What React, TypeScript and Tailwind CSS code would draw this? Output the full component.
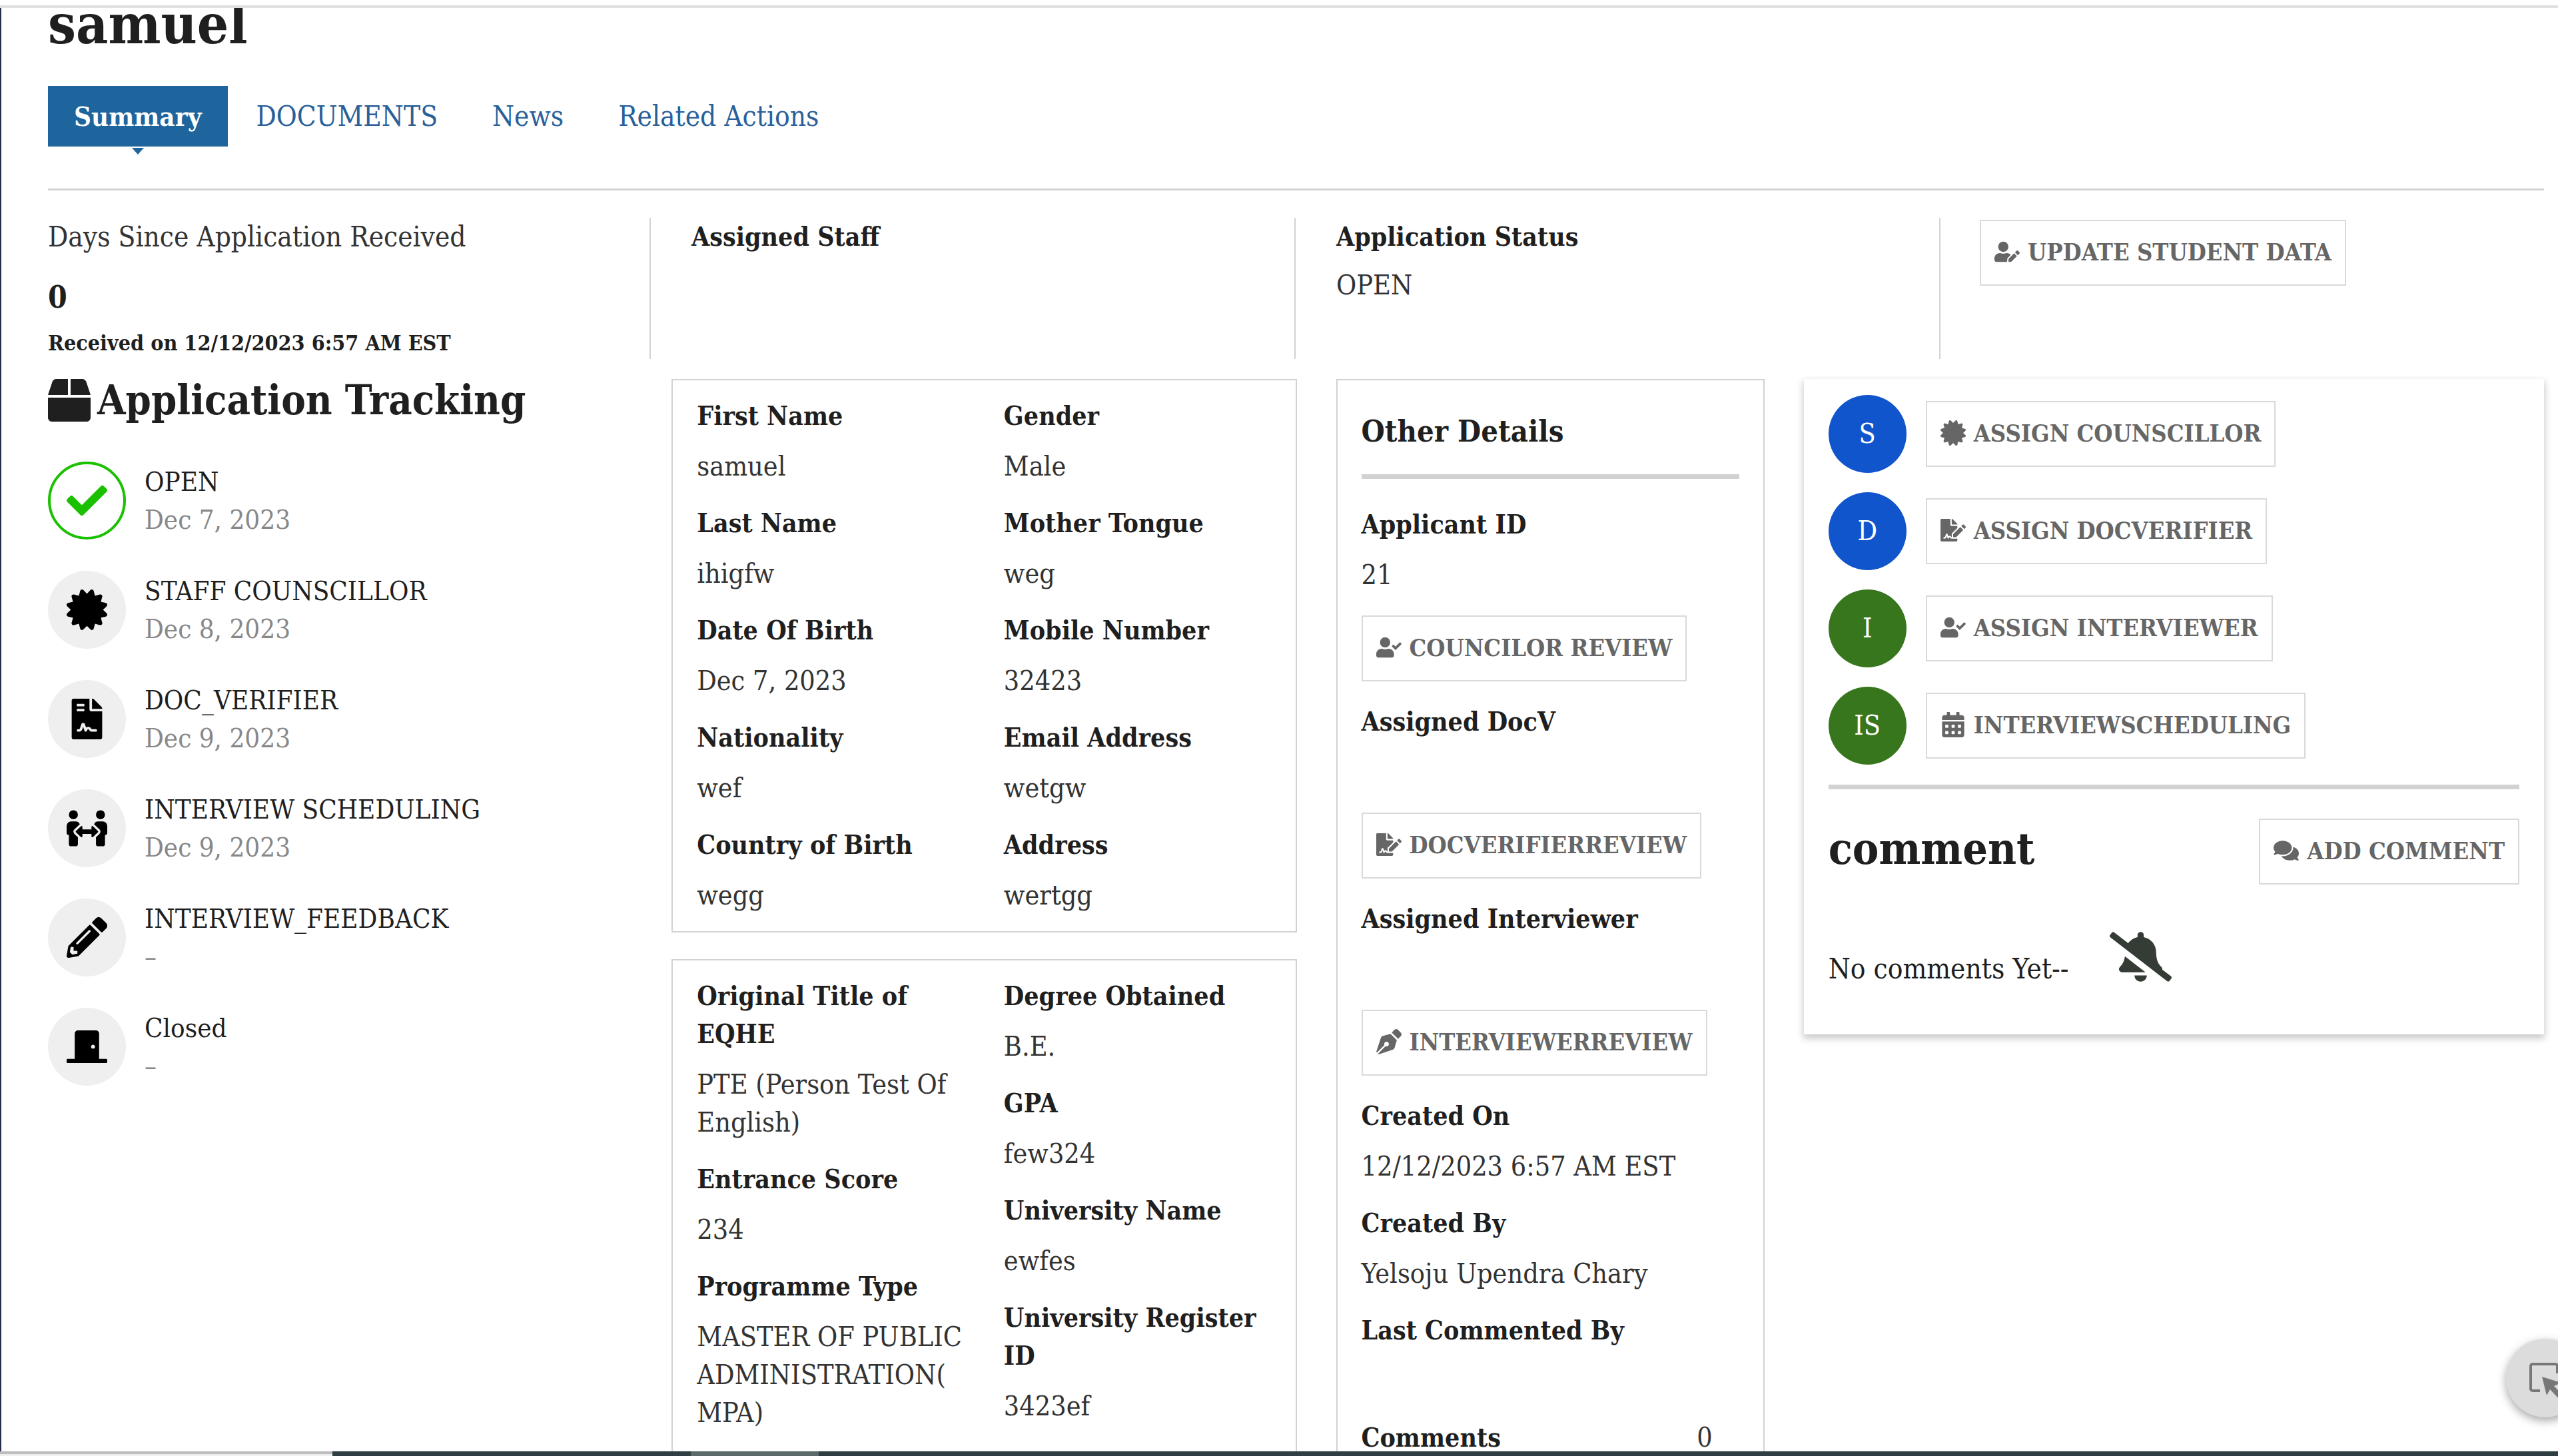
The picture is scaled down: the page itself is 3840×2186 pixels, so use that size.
import type { ReactNode } from 'react'
import type { IconType } from 'react-icons'
import {
  FaBellSlash,
  FaBox,
  FaCalendarAlt,
  FaCertificate,
  FaCheck,
  FaComments,
  FaDoorClosed,
  FaFileContract,
  FaFileSignature,
  FaPencilAlt,
  FaPenNib,
  FaPeopleArrows,
  FaUserCheck,
  FaUserEdit,
} from 'react-icons/fa'

const tabs = ['Summary', 'DOCUMENTS', 'News', 'Related Actions']

const steps: { icon: IconType; label: string; date: string; done?: boolean }[] = [
  { icon: FaCheck, label: 'OPEN', date: 'Dec 7, 2023', done: true },
  { icon: FaCertificate, label: 'STAFF COUNSCILLOR', date: 'Dec 8, 2023' },
  { icon: FaFileContract, label: 'DOC_VERIFIER', date: 'Dec 9, 2023' },
  { icon: FaPeopleArrows, label: 'INTERVIEW SCHEDULING', date: 'Dec 9, 2023' },
  { icon: FaPencilAlt, label: 'INTERVIEW_FEEDBACK', date: '–' },
  { icon: FaDoorClosed, label: 'Closed', date: '–' },
]

const personal = [
  [
    ['First Name', 'samuel'],
    ['Last Name', 'ihigfw'],
    ['Date Of Birth', 'Dec 7, 2023'],
    ['Nationality', 'wef'],
    ['Country of Birth', 'wegg'],
  ],
  [
    ['Gender', 'Male'],
    ['Mother Tongue', 'weg'],
    ['Mobile Number', '32423'],
    ['Email Address', 'wetgw'],
    ['Address', 'wertgg'],
  ],
]

const education = [
  [
    ['Original Title of EQHE', 'PTE (Person Test Of English)'],
    ['Entrance Score', '234'],
    ['Programme Type', 'MASTER OF PUBLIC ADMINISTRATION(MPA)'],
  ],
  [
    ['Degree Obtained', 'B.E.'],
    ['GPA', 'few324'],
    ['University Name', 'ewfes'],
    ['University Register ID', '3423ef'],
  ],
]

const assignments = [
  { initials: 'S', color: 'bg-[#1155cc]', icon: FaCertificate, label: 'ASSIGN COUNSCILLOR' },
  { initials: 'D', color: 'bg-[#1155cc]', icon: FaFileSignature, label: 'ASSIGN DOCVERIFIER' },
  { initials: 'I', color: 'bg-[#38761d]', icon: FaUserCheck, label: 'ASSIGN INTERVIEWER' },
  { initials: 'IS', color: 'bg-[#38761d]', icon: FaCalendarAlt, label: 'INTERVIEWSCHEDULING' },
]

function ActionButton({ icon: Icon, children }: { icon: IconType; children: ReactNode }) {
  return (
    <button
      type="button"
      className="inline-flex h-[99px] items-center gap-3 whitespace-nowrap border-2 border-[#d9d9d9] bg-white px-5 pb-1 text-[36px] font-bold text-[#666]"
    >
      <Icon className="size-[38px]" />
      {children}
    </button>
  )
}

function Label({ children }: { children: ReactNode }) {
  return <dt className="text-[39px] leading-[57px] font-bold">{children}</dt>
}

function Field({ label, value }: { label: string; value: string }) {
  return (
    <div>
      <Label>{label}</Label>
      <dd className="mt-[19px] min-h-[57px] leading-[57px] break-words text-[#333]">{value}</dd>
    </div>
  )
}

function FieldBox({ columns }: { columns: string[][][] }) {
  return (
    <div className="grid grid-cols-2 gap-x-[59px] border-2 border-[#d2d2d2] px-9 py-[25px] last:grow">
      {columns.map((fields, i) => (
        <dl key={i} className="flex min-w-0 flex-col gap-7">
          {fields.map(([label, value]) => (
            <Field key={label} label={label} value={value} />
          ))}
        </dl>
      ))}
    </div>
  )
}

function Header() {
  return (
    <header>
      <h1 className="text-[83px] leading-[48px] font-bold">samuel</h1>
      <nav className="mt-[69px] flex gap-1 border-b-[3px] border-[#d2d2d2] pb-[63px] text-[42px] leading-[91px]">
        {tabs.map((tab, i) =>
          i === 0 ? (
            <a key={tab} href="#" aria-current="page" className="relative bg-[#1d659c] px-[39px] text-[40px] font-bold text-white">
              {tab}
              <svg viewBox="0 0 18 10" className="absolute top-full left-1/2 mt-0.5 h-[10px] w-[18px] -translate-x-1/2 fill-[#1d659c]">
                <path d="M0 0h18L9 10z" />
              </svg>
            </a>
          ) : (
            <a key={tab} href="#" className="px-[39px] text-[#2a6099]">
              {tab}
            </a>
          )
        )}
      </nav>
    </header>
  )
}

function StatusRow() {
  return (
    <section className="mt-[41px] grid grid-cols-[905fr_968fr_968fr_906fr]">
      <div className="border-r-2 border-[#d2d2d2]">
        <p className="text-[42px] leading-[57px] text-[#333]">Days Since Application Received</p>
        <p className="mt-[34px] text-[46px] leading-[57px] font-bold">0</p>
        <p className="mt-4 text-[32px] leading-[48px] font-bold">Received on 12/12/2023 6:57 AM EST</p>
      </div>
      <dl className="border-r-2 border-[#d2d2d2] pl-[61px]">
        <Label>Assigned Staff</Label>
      </dl>
      <dl className="border-r-2 border-[#d2d2d2] pl-[61px]">
        <Label>Application Status</Label>
        <dd className="mt-4 leading-[57px] text-[#333]">OPEN</dd>
      </dl>
      <div className="pt-[3px] pl-[59px]">
        <ActionButton icon={FaUserEdit}>UPDATE STUDENT DATA</ActionButton>
      </div>
    </section>
  )
}

function Tracking() {
  return (
    <section>
      <h2 className="flex items-center gap-[10px] text-[61px] leading-[64px] font-bold whitespace-nowrap">
        <FaBox className="size-[64px]" />
        Application Tracking
      </h2>
      <ol className="mt-[60px] flex flex-col gap-[47px] text-[40px]">
        {steps.map(({ icon: Icon, label, date, done }) => (
          <li key={label} className="flex items-center gap-7">
            <span
              className={
                done
                  ? 'flex size-[117px] items-center justify-center rounded-full border-[4px] border-[#1bc100] text-[#1bc100]'
                  : 'flex size-[117px] items-center justify-center rounded-full bg-[#efefef] text-black'
              }
            >
              <Icon className="size-[61px]" />
            </span>
            <div className="leading-[57px]">
              <p>{label}</p>
              <p className="text-[#888]">{date}</p>
            </div>
          </li>
        ))}
      </ol>
    </section>
  )
}

function OtherDetails() {
  return (
    <section className="border-2 border-[#d2d2d2] px-9 pt-12 pb-[25px]">
      <h3 className="border-b-[7px] border-[#d2d2d2] pb-9 text-[45px] leading-[57px] font-bold">Other Details</h3>
      <dl className="mt-10 flex flex-col items-start gap-8">
        <Field label="Applicant ID" value="21" />
        <ActionButton icon={FaUserCheck}>COUNCILOR REVIEW</ActionButton>
        <Field label="Assigned DocV" value="" />
        <ActionButton icon={FaFileSignature}>DOCVERIFIERREVIEW</ActionButton>
        <Field label="Assigned Interviewer" value="" />
        <ActionButton icon={FaPenNib}>INTERVIEWERREVIEW</ActionButton>
      </dl>
      <dl className="mt-8 flex flex-col gap-7">
        <Field label="Created On" value="12/12/2023 6:57 AM EST" />
        <Field label="Created By" value="Yelsoju Upendra Chary" />
        <Field label="Last Commented By" value="" />
        <div className="flex justify-between pr-10">
          <Label>Comments</Label>
          <dd className="leading-[57px] text-[#333]">0</dd>
        </div>
      </dl>
    </section>
  )
}

function ActionsCard() {
  return (
    <section className="self-start bg-white px-[37px] pt-6 pb-[70px] shadow-[0_5px_10px_1px_rgba(0,0,0,0.22)]">
      <ul className="flex flex-col gap-[29px] border-b-[7px] border-[#d2d2d2] pb-[30px]">
        {assignments.map(({ initials, color, icon, label }) => (
          <li key={label} className="flex items-center gap-[29px]">
            <span className={`flex size-[117px] items-center justify-center rounded-full text-white ${color}`}>{initials}</span>
            <ActionButton icon={icon}>{label}</ActionButton>
          </li>
        ))}
      </ul>
      <div className="mt-11 flex items-start justify-between">
        <h2 className="text-[66px] leading-[90px] font-bold">comment</h2>
        <ActionButton icon={FaComments}>ADD COMMENT</ActionButton>
      </div>
      <div className="mt-[62px] flex items-end gap-[61px]">
        <p className="text-[42px] leading-[57px]">No comments Yet--</p>
        <FaBellSlash className="size-[93px] text-[#353b35]" />
      </div>
    </section>
  )
}

export default function App() {
  return (
    <div className="relative flex h-screen flex-col overflow-hidden bg-white font-['DejaVu_Serif_Condensed','DejaVu_Serif',serif] text-[41px] text-[#1f1f1f]">
      <div className="mt-2 h-1 shrink-0 bg-[#dfe1de]" />
      <main className="min-h-0 flex-1 overflow-hidden border-l-2 border-[#26304a] pr-[21px] pl-[70px]">
        <Header />
        <StatusRow />
        <div className="mt-[30px] grid grid-cols-[877fr_938fr_643fr_1111fr] gap-x-[59px]">
          <Tracking />
          <div className="flex flex-col gap-10">
            <FieldBox columns={personal} />
            <FieldBox columns={education} />
          </div>
          <OtherDetails />
          <ActionsCard />
        </div>
      </main>

      {/* Window strip along the bottom */}
      <footer className="flex h-[7px] shrink-0 bg-[#2e3e42]">
        <div className="w-[13%] border-t-4 border-[#bdbdbd] bg-[#efefef]" />
        <div className="ml-[14%] w-[5%] bg-[#5c6a69]" />
      </footer>

      {/* Floating capture button, half off the right edge */}
      <button
        type="button"
        aria-label="Select element"
        className="absolute -right-10 bottom-[58px] size-[118px] rounded-full bg-[#dcdcdc] shadow-[0_5px_14px_rgba(0,0,0,0.35)]"
      >
        <svg viewBox="0 0 118 118" className="size-full" fill="none">
          <path d="M51 78H40a3 3 0 0 1-3-3V41a3 3 0 0 1 3-3h34a3 3 0 0 1 3 3v11" stroke="#777" strokeWidth="4" />
          <path d="M54 57l29 9-11 5 14 14-6 6-14-15-5 9z" fill="#777" />
        </svg>
      </button>
    </div>
  )
}
